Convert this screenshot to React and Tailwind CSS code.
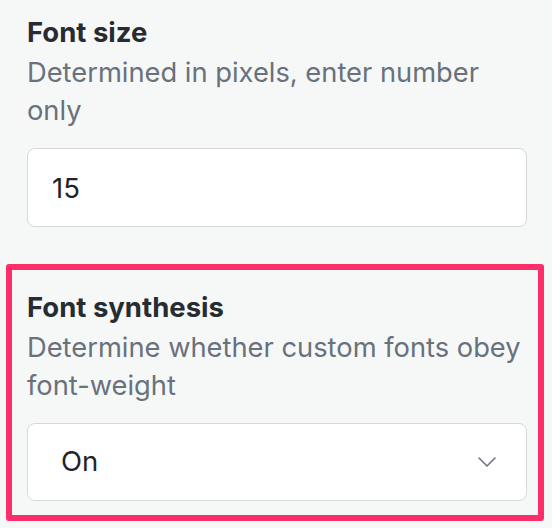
const font = { fontFamily: 'Inter, "Noto Sans", sans-serif' }

function Field({ title, hint, children }) {
  return (
    <div>
      <div className="text-[27.5px] leading-[38px] font-bold text-[#272c33]">{title}</div>
      <div className="mt-[3px] text-[27.3px] leading-[38px] text-[#69717c]">{hint}</div>
      <div className="mt-[18px]">{children}</div>
    </div>
  )
}

export default function App() {
  return (
    <div className="w-[552px] h-[528px] bg-[#f6f8f8] overflow-hidden" style={font}>
      <div className="pl-[27px] pr-[25px] pt-[13px]">
        <Field title="Font size" hint="Determined in pixels, enter number only">
          <input
            defaultValue="15"
            className="block w-full h-[79px] rounded-[8px] border-[1.5px] border-[#d5d8dc] bg-white px-[24px] text-[27.5px] text-[#1f2429] outline-none"
          />
        </Field>
      </div>

      <div className="ml-[6px] mt-[37px] w-[538px] rounded-[3px] border-[6px] border-[#fe2e6b] pl-[15px] pr-[11px] pt-[18px] pb-[14px]">
        <Field title="Font synthesis" hint="Determine whether custom fonts obey font-weight">
          <button className="flex w-full h-[78px] items-center justify-between rounded-[8px] border-[1.5px] border-[#d5d8dc] bg-white pl-[33px] pr-[30px] text-[27.5px] text-[#1f2429]">
            <span>On</span>
            <svg width="18" height="10" viewBox="0 0 18 10" fill="none" stroke="#6b7280" strokeWidth="1.6" strokeLinecap="round" strokeLinejoin="round">
              <path d="M1 1l8 8 8-8" />
            </svg>
          </button>
        </Field>
      </div>
    </div>
  )
}
